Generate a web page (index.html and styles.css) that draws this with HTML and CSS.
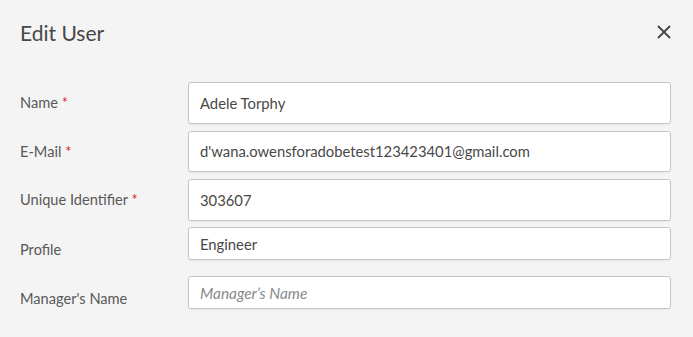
FILE: index.html
```html
<!DOCTYPE html>
<html lang="en">
<head>
  <meta charset="UTF-8">
  <title>Edit User</title>
  <link rel="stylesheet" href="styles.css">
</head>
<body>
  <div class="dialog">
    <header class="dialog-head">
      <h1>Edit User</h1>
      <button class="close-btn" aria-label="Close">
        <svg width="14" height="14" viewBox="0 0 14 14"><path d="M1 1L13 13M13 1L1 13" stroke="#444" stroke-width="1.8" fill="none"/></svg>
      </button>
    </header>
    <form class="form">
      <div class="row tall">
        <label>Name <span class="req">*</span></label>
        <div class="field">Adele Torphy</div>
      </div>
      <div class="row tall">
        <label>E-Mail <span class="req">*</span></label>
        <div class="field">d'wana.owensforadobetest123423401@gmail.com</div>
      </div>
      <div class="row tall">
        <label>Unique Identifier <span class="req">*</span></label>
        <div class="field">303607</div>
      </div>
      <div class="row short">
        <label>Profile</label>
        <div class="field">Engineer</div>
      </div>
      <div class="row short">
        <label>Manager's Name</label>
        <div class="field placeholder">Manager’s Name</div>
      </div>
    </form>
  </div>
</body>
</html>
```

FILE: styles.css
```css
* { box-sizing: border-box; }
body {
  margin: 0;
  background: #f4f4f4;
  font-family: Lato, "Noto Sans", sans-serif;
  color: #4a4a4a;
}
.dialog { padding: 0 22px 0 20px; }
.dialog-head {
  display: flex;
  justify-content: space-between;
  align-items: center;
  height: 64px;
}
h1 {
  margin: 0;
  font-size: 21px;
  font-weight: 400;
  color: #484848;
}
.close-btn {
  border: none;
  background: none;
  padding: 0;
  width: 14px;
  height: 14px;
  cursor: pointer;
  display: flex;
}
.form {
  display: flex;
  flex-direction: column;
  padding-top: 18px;
}
.row {
  display: grid;
  grid-template-columns: 168px 1fr;
  align-items: center;
  margin-bottom: 7px;
}
.row.tall:nth-child(3) { margin-bottom: 6.5px; }
.row.short { margin-bottom: 16px; }
.row label {
  font-size: 14.6px;
  color: #585858;
}
.req { color: #d9282f; }
.row.short label { padding-top: 12px; }
.field {
  background: #fff;
  border: 1px solid #c6c6c6;
  border-radius: 3px;
  box-shadow: 0 1px 2px rgba(0,0,0,0.06);
  padding: 0 11px;
  font-size: 14.8px;
  color: #484848;
  display: flex;
  align-items: center;
}
.row.tall .field { height: 41.5px; }
.row.short .field { height: 33px; }
.field.placeholder {
  font-style: italic;
  font-size: 15.4px;
  color: #8a8a8a;
}
```
